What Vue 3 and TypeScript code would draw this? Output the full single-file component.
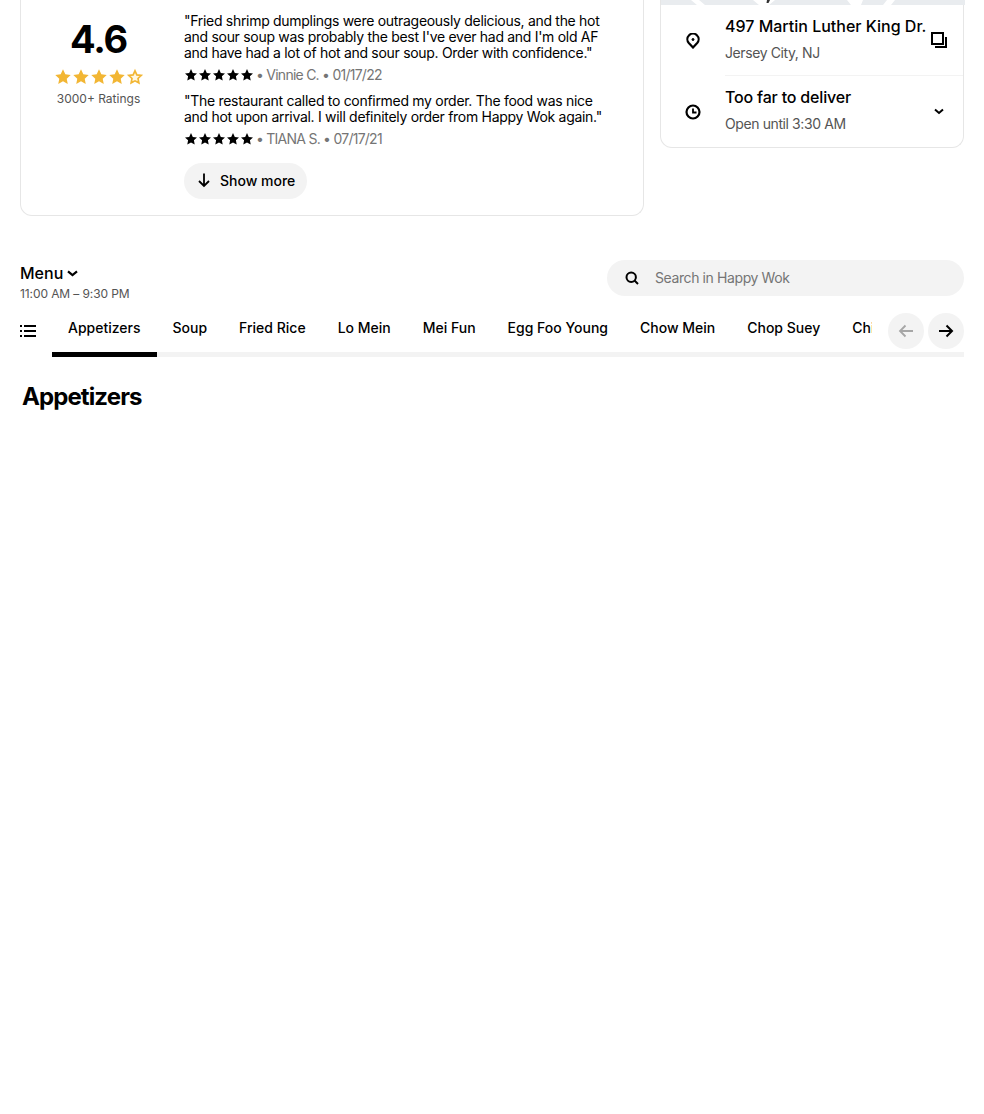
<script setup lang="ts">
const tabs = ['Appetizers', 'Soup', 'Fried Rice', 'Lo Mein', 'Mei Fun', 'Egg Foo Young', 'Chow Mein', 'Chop Suey', 'Chicken']
const star = 'M7 1l1.8 3.9 4.2.5-3.1 2.9.8 4.2L7 10.4l-3.7 2.1.8-4.2L1 5.4l4.2-.5z'
const reviews = [
  {
    text: '"Fried shrimp dumplings were outrageously delicious, and the hot and sour soup was probably the best I\'ve ever had and I\'m old AF and have had a lot of hot and sour soup. Order with confidence."',
    meta: 'Vinnie C. • 01/17/22',
  },
  {
    text: '"The restaurant called to confirmed my order. The food was nice and hot upon arrival. I will definitely order from Happy Wok again."',
    meta: 'TIANA S. • 07/17/21',
  },
]
</script>

<template>
  <div class="page">
    <section class="top">
      <div class="card reviews-card">
        <div class="score">
          <div class="score-num">4.6</div>
          <div class="score-stars">
            <svg v-for="n in 4" :key="n" width="18" height="18" viewBox="0 0 14 14"><path :d="star" fill="#f2b634" /></svg>
            <svg width="18" height="18" viewBox="0 0 14 14"><path d="M7 2.200l1.450 3.200 3.400.4-2.500 2.350.65 3.400L7 10l-3 1.550.65-3.400-2.500-2.350 3.400-.4z" fill="#fff7e2" stroke="#f2b634" stroke-width="1.300" /></svg>
          </div>
          <div class="score-count">3000+ Ratings</div>
        </div>
        <div class="reviews">
          <div v-for="r in reviews" :key="r.meta" class="review">
            <p class="review-text">{{ r.text }}</p>
            <div class="review-meta">
              <span class="mini-stars">
                <svg v-for="n in 5" :key="n" width="14" height="14" viewBox="0 0 14 14"><path :d="star" fill="#000" /></svg>
              </span>
              <span>• {{ r.meta }}</span>
            </div>
          </div>
          <button class="more">
            <svg width="16" height="16" viewBox="0 0 16 16" fill="none" stroke="#000" stroke-width="1.8"><path d="M8 1.500v12M3 9l5 5 5-5" /></svg>
            Show more
          </button>
        </div>
      </div>

      <div class="card info-card">
        <svg class="map-strip" width="304" height="5" viewBox="0 0 304 5" preserveAspectRatio="none">
          <rect width="304" height="5" fill="#e9ecef" />
          <path d="M30 0h8l6 5h-8zM92 0h22l-6 5h-10zM186 0h16l-2 5h-10zM226 0h8l-4 5h-8z" fill="#fff" />
          <path d="M106 0h3l-1.500 3h-2z" fill="#333" />
        </svg>
        <div class="info-row">
          <svg class="row-icon" width="16" height="16" viewBox="0 0 16 16" fill="none" stroke="#000" stroke-width="2.200"><path d="M8 14.500 3.800 10A5.600 5.600 0 1 1 12.200 10z" /><circle cx="8" cy="6.500" r="1" fill="#000" stroke-width="1" /></svg>
          <div class="row-body first">
            <div class="row-title">497 Martin Luther King Dr.</div>
            <div class="row-sub">Jersey City, NJ</div>
            <svg class="row-action" width="16" height="16" viewBox="0 0 16 16" fill="none" stroke="#000" stroke-width="2"><rect x="1" y="1" width="11" height="11" /><path d="M4 15h11V5" /></svg>
          </div>
        </div>
        <div class="info-row">
          <svg class="row-icon" width="16" height="16" viewBox="0 0 16 16" fill="none" stroke="#000" stroke-width="2.200"><circle cx="8" cy="8" r="6.500" /><path d="M8 4.500V8.500H11.500" stroke-width="1.800" /></svg>
          <div class="row-body second">
            <div class="row-title">Too far to deliver</div>
            <div class="row-sub">Open until 3:30 AM</div>
            <svg class="row-action chev" width="10" height="7" viewBox="0 0 10 7" fill="none" stroke="#000" stroke-width="2"><path d="M1 1.500 5 5l4-3.500" /></svg>
          </div>
        </div>
      </div>
    </section>

    <section class="menu-head">
      <div>
        <div class="menu-title">
          Menu
          <svg width="11" height="7" viewBox="0 0 11 7" fill="none" stroke="#000" stroke-width="2.200"><path d="M1 1.300 5.500 5 10 1.300" /></svg>
        </div>
        <div class="menu-hours">11:00 AM – 9:30 PM</div>
      </div>
      <div class="search">
        <svg width="14" height="14" viewBox="0 0 14 14" fill="none" stroke="#000" stroke-width="2"><circle cx="6.200" cy="6.200" r="4.700" /><path d="M9.500 9.500 13 13" /></svg>
        <span>Search in Happy Wok</span>
      </div>
    </section>

    <nav class="tabs-bar">
      <svg class="list-icon" width="16" height="12" viewBox="0 0 16 12" fill="#000"><path d="M0 0h2v2H0zM4 0h12v2H4zM0 5h2v2H0zM4 5h12v2H4zM0 10h2v2H0zM4 10h12v2H4z" /></svg>
      <div class="tabs">
        <div v-for="(t, i) in tabs" :key="t" class="tab" :class="{ active: i === 0 }">{{ t }}</div>
      </div>
      <button class="round">
        <svg width="16" height="14" viewBox="0 0 16 14" fill="none" stroke="#a6a6a6" stroke-width="1.800"><path d="M15 7H2M7.500 1.500 2 7l5.500 5.500" /></svg>
      </button>
      <button class="round">
        <svg width="16" height="14" viewBox="0 0 16 14" fill="none" stroke="#000" stroke-width="2"><path d="M1 7h13M8.500 1.500 14 7l-5.500 5.500" /></svg>
      </button>
    </nav>

    <h2 class="section-title">Appetizers</h2>
  </div>
</template>

<style scoped>
.page {
  height: 1114px;
  overflow: hidden;
  padding: 0 20px;
  box-sizing: border-box;
  color: #000;
  font-family: Inter, 'Liberation Sans', sans-serif;
}

.top {
  display: flex;
  align-items: flex-start;
  gap: 16px;
}

.card {
  border: 1px solid #e6e6e6;
  border-top: none;
  border-radius: 0 0 12px 12px;
  background: #fff;
  box-sizing: border-box;
}

/* ===== reviews ===== */
.reviews-card {
  display: flex;
  width: 624px;
  height: 216px;
}

.score {
  width: 155px;
  flex: none;
  padding-top: 19px;
  text-align: center;
}

.score-num {
  font-size: 38px;
  line-height: 40px;
  font-weight: 700;
  letter-spacing: -1.2px;
}

.score-stars {
  display: flex;
  justify-content: center;
  margin-top: 9px;
  height: 18px;
}

.score-count {
  margin-top: 5px;
  font-size: 12px;
  line-height: 16px;
  color: #545454;
}

.reviews {
  padding: 13px 0 0 8px;
  display: flex;
  flex-direction: column;
  align-items: flex-start;
}

.review {
  width: 424px;
  margin-bottom: 10px;
}

.review + .review {
  margin-bottom: 16px;
}

.review-text {
  margin: 0;
  font-size: 14px;
  line-height: 16px;
  letter-spacing: -0.3px;
}

.review-meta {
  display: flex;
  align-items: center;
  gap: 2px;
  margin-top: 6px;
  height: 16px;
  font-size: 14px;
  line-height: 16px;
  letter-spacing: -0.75px;
  color: #757575;
}

.mini-stars {
  display: flex;
}

.more {
  display: flex;
  align-items: center;
  gap: 8px;
  height: 36px;
  padding: 0 12px 2px;
  border: none;
  border-radius: 18px;
  background: #f3f3f3;
  color: #000;
  font: 500 14px Inter, 'Liberation Sans', sans-serif;
}

/* ===== info card ===== */
.info-card {
  width: 304px;
  height: 148px;
}

.map-strip {
  display: block;
}

.info-row {
  display: flex;
  align-items: center;
}

.row-icon {
  flex: none;
  margin: 0 24px;
}

.row-body {
  position: relative;
  flex: 1;
  box-sizing: border-box;
}

.row-body.first {
  height: 71px;
  padding-top: 11px;
  border-bottom: 1px solid #f3f3f3;
}

.row-body.second {
  height: 71px;
  padding-top: 11px;
}

.row-title {
  font-size: 16px;
  line-height: 20px;
  font-weight: 500;
  white-space: nowrap;
}

.second .row-title {
  letter-spacing: -0.18px;
}

.row-sub {
  margin-top: 7px;
  font-size: 14px;
  line-height: 20px;
  letter-spacing: -0.4px;
  color: #545454;
}

.row-action {
  position: absolute;
  right: 16px;
  top: 27px;
}

.row-action.chev {
  right: 19px;
  top: 32px;
}

/* ===== menu head ===== */
.menu-head {
  display: flex;
  justify-content: space-between;
  margin-top: 44px;
}

.menu-title {
  display: flex;
  align-items: center;
  gap: 4px;
  font-size: 16px;
  line-height: 26px;
  font-weight: 500;
}

.menu-hours {
  font-size: 12px;
  line-height: 16px;
  letter-spacing: -0.1px;
  color: #545454;
}

.search {
  display: flex;
  align-items: center;
  gap: 16px;
  width: 357px;
  height: 36px;
  padding-left: 18px;
  box-sizing: border-box;
  border-radius: 18px;
  background: #f3f3f3;
  font-size: 14px;
  line-height: 34px;
  letter-spacing: -0.4px;
  color: #757575;
}

/* ===== tabs ===== */
.tabs-bar {
  position: relative;
  display: flex;
  align-items: flex-start;
  gap: 4px;
  height: 44px;
  margin-top: 11px;
}

.tabs-bar::after {
  content: '';
  position: absolute;
  left: 32px;
  right: 0;
  bottom: 0;
  height: 5px;
  background: #f3f3f3;
}

.list-icon {
  position: absolute;
  left: 0;
  top: 12px;
}

.tabs {
  position: relative;
  z-index: 1;
  flex: 1;
  display: flex;
  height: 44px;
  margin: 0 12px 0 32px;
  overflow: hidden;
}

.tab {
  flex: none;
  height: 44px;
  padding: 7px 16px 0;
  box-sizing: border-box;
  font-size: 14px;
  line-height: 16px;
  font-weight: 500;
  white-space: nowrap;
}

.tab.active {
  border-bottom: 5px solid #000;
}

.round {
  flex: none;
  position: relative;
  z-index: 1;
  display: flex;
  align-items: center;
  justify-content: center;
  width: 36px;
  height: 36px;
  padding: 0;
  border: none;
  border-radius: 50%;
  background: #f3f3f3;
}

.section-title {
  margin: 26px 0 0 2px;
  font-size: 24px;
  line-height: 28px;
  font-weight: 700;
  letter-spacing: -0.9px;
}
</style>
